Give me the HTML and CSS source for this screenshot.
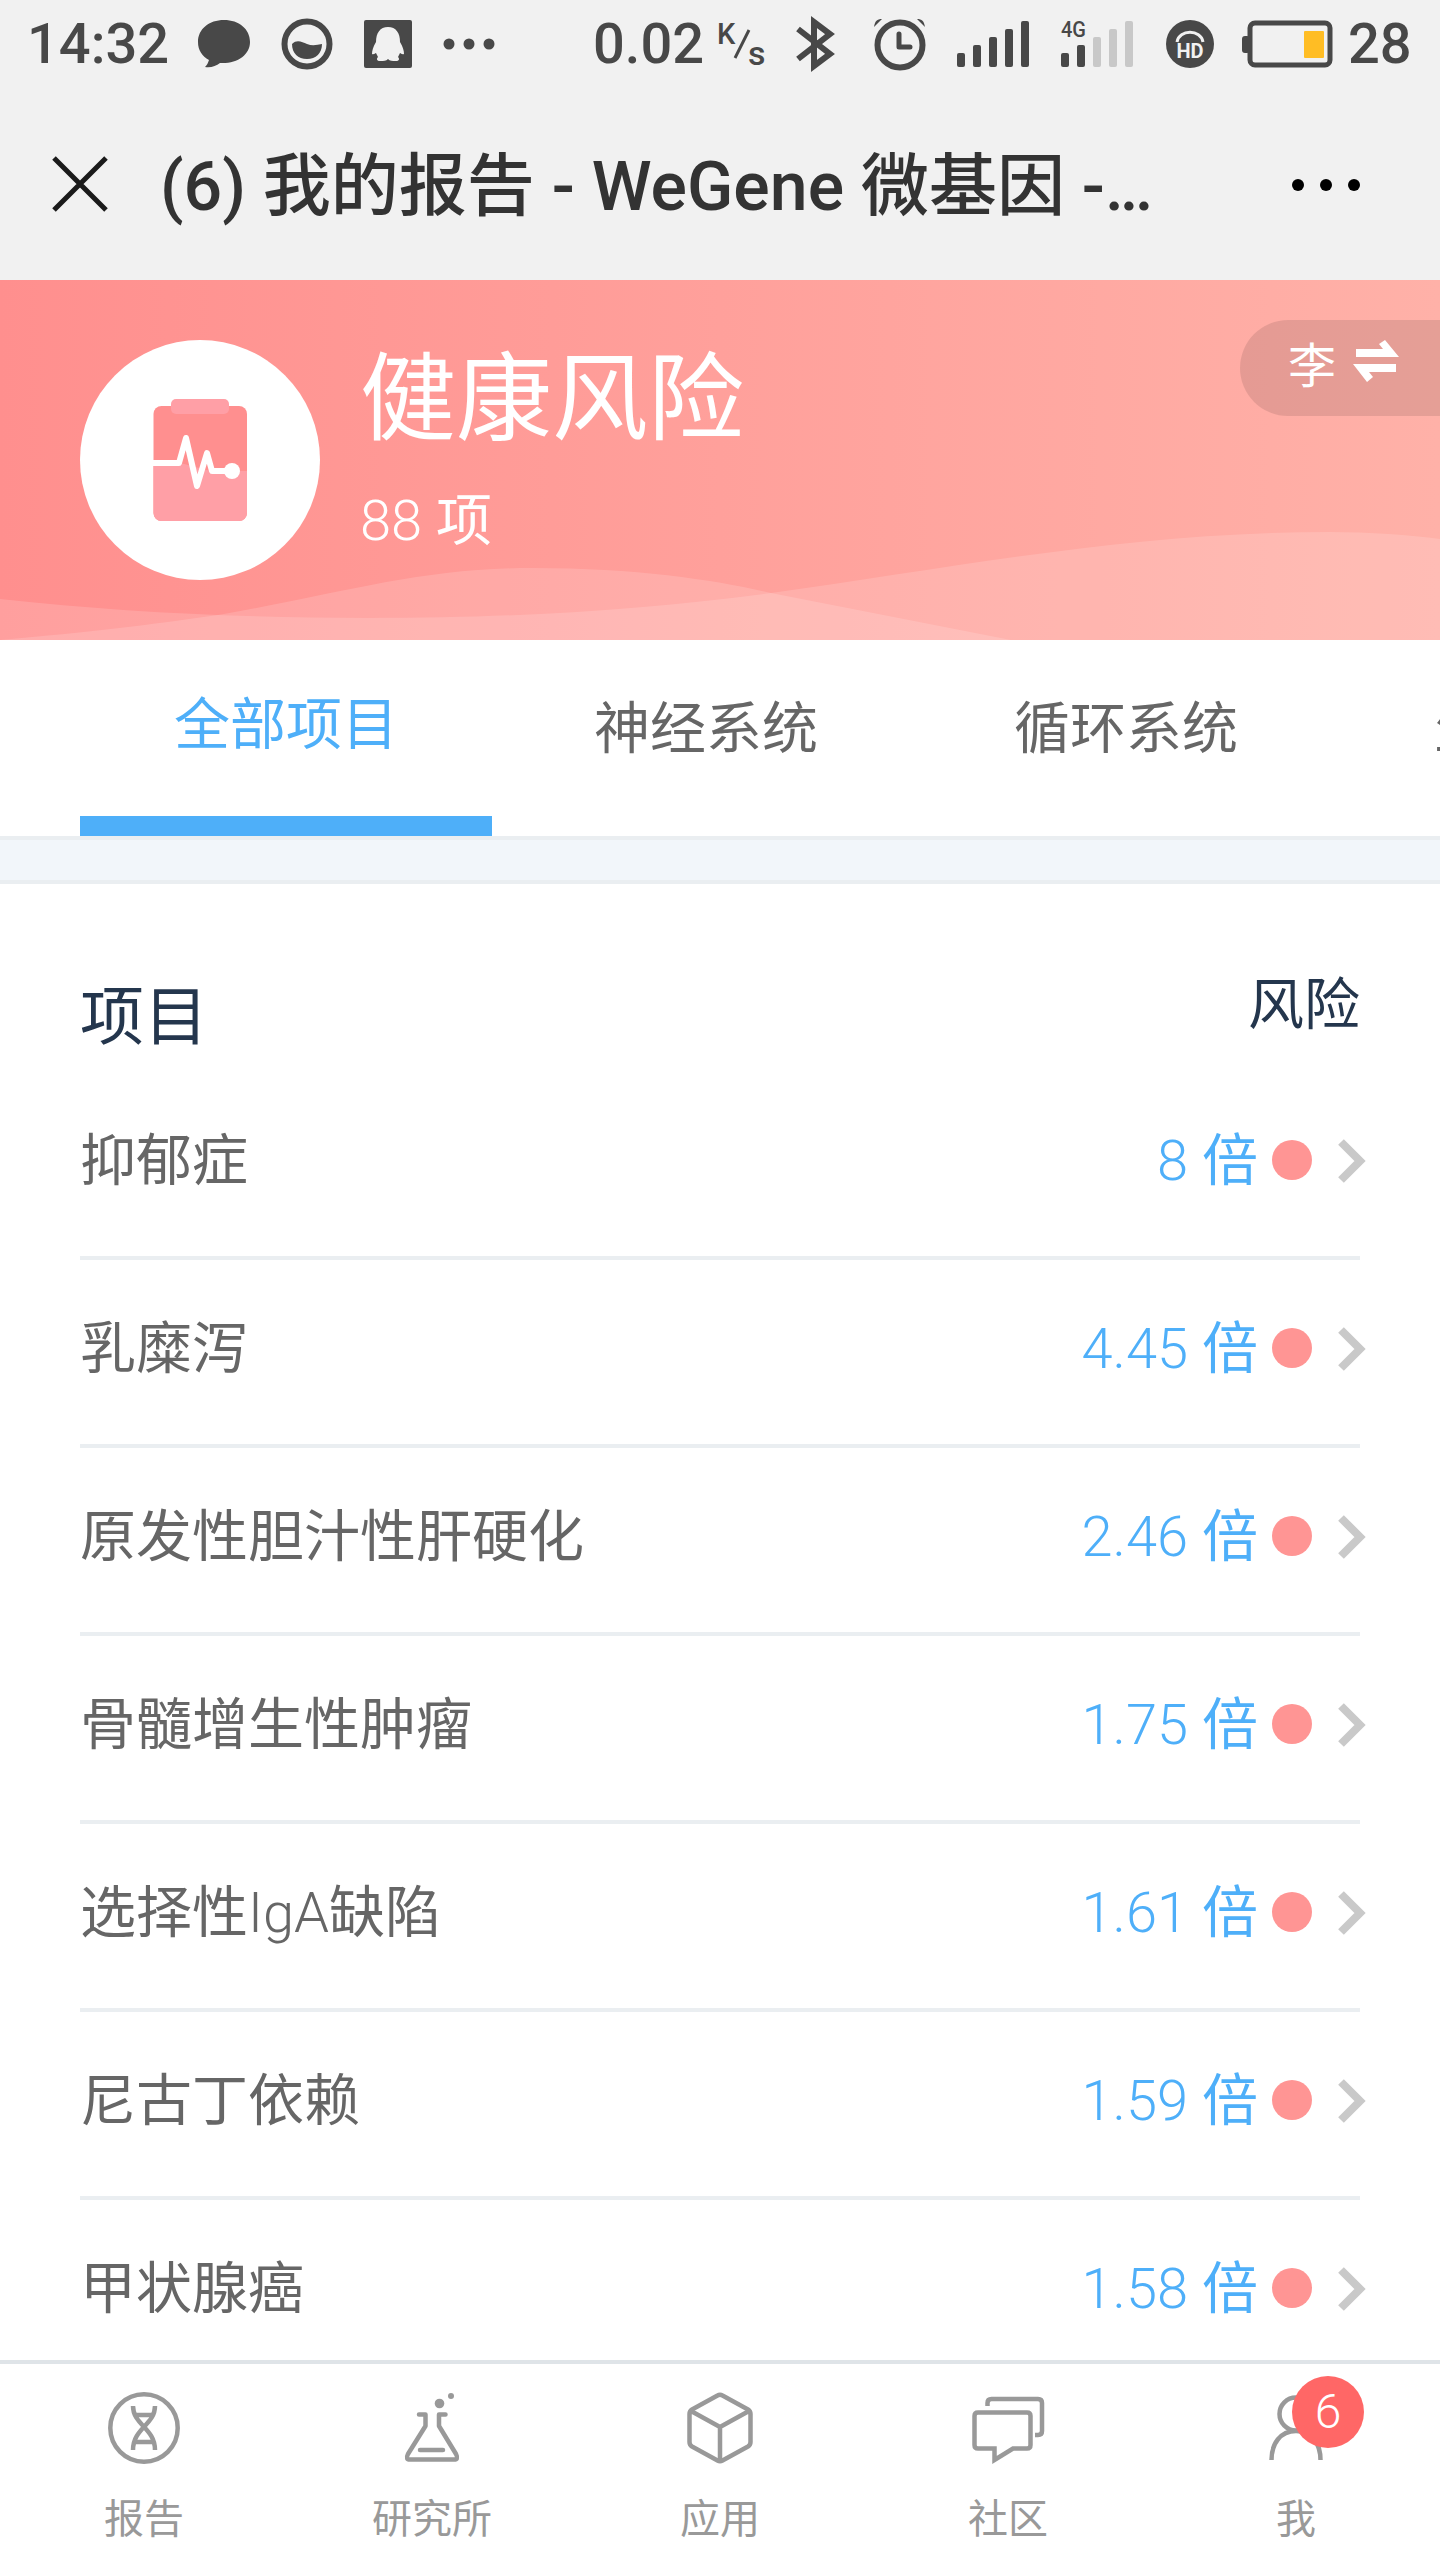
FILE: index.html
```
<!DOCTYPE html>
<html lang="zh-CN">
<head>
    <meta charset="UTF-8">
    <meta name="viewport" content="width=device-width, initial-scale=1.0">
    <title>(6) 我的报告 - WeGene 微基因</title>
    <link rel="stylesheet" href="styles.css">
</head>
<body>
    <div class="status-bar">
        <span class="time">14:32</span>
        <svg class="st-chat" width="52" height="50" viewBox="0 0 52 50"><path d="M26 1C11 1 0 10 0 23c0 8 4 14 11 18-1 3-2 5-4 7 6 1 11-1 15-4 17 1 30-8 30-21C52 10 41 1 26 1z" fill="#484848"/></svg>
        <svg class="st-face" width="52" height="52" viewBox="0 0 52 52"><circle cx="26" cy="26" r="22.5" fill="none" stroke="#484848" stroke-width="6"/><path d="M11 26c5-5 10-2 15 0s10 1 15 0c0 9-6 15-15 15s-15-6-15-15z" fill="#484848"/></svg>
        <svg class="st-qq" width="48" height="48" viewBox="0 0 48 48"><rect width="48" height="48" rx="2" fill="#484848"/><path d="M24 7c8 0 12 6 12 15 3 5 4 9 4 12-2 1-3-1-4-1l-2 4c2 2 1 4-2 4-4 0-6 0-8-2-2 2-4 2-8 2-3 0-4-2-2-4l-2-4c-1 0-2 2-4 1 0-3 1-7 4-12 0-9 4-15 12-15z" fill="#f1f1f1"/></svg>
        <svg class="st-more" width="52" height="12" viewBox="0 0 52 12"><g fill="#484848"><circle cx="6" cy="6" r="5.5"/><circle cx="26" cy="6" r="5.5"/><circle cx="46" cy="6" r="5.5"/></g></svg>
        <span class="speed">0.02</span>
        <span class="unit"><span class="unit-k">K</span><svg width="18" height="30" viewBox="0 0 18 30"><path d="M2 29L16 1" stroke="#484848" stroke-width="3"/></svg><span class="unit-s">s</span></span>
        <svg class="st-bt" width="40" height="52" viewBox="0 0 40 52"><path d="M2 11L34 36 18 48V4l16 12L2 41" fill="none" stroke="#484848" stroke-width="6"/></svg>
        <svg class="st-alarm" width="52" height="52" viewBox="0 0 52 52"><g fill="none" stroke="#484848" stroke-width="6"><circle cx="26" cy="27" r="22.5"/><path d="M25 16v13h11" stroke-width="5" stroke-linejoin="round" stroke-linecap="round"/></g><path d="M0 9C1 3 3 1 8 1zM51 9C50 3 48 1 43 1z" fill="#484848"/></svg>
        <svg class="st-signal" width="72" height="46" viewBox="0 0 72 46"><g fill="#484848"><rect y="32" width="8" height="14" rx="2"/><rect x="16" y="24" width="8" height="22" rx="2"/><rect x="32" y="16" width="8" height="30" rx="2"/><rect x="48" y="8" width="8" height="38" rx="2"/><rect x="64" width="8" height="46" rx="2"/></g></svg>
        <svg class="st-signal2" width="72" height="46" viewBox="0 0 72 46"><text x="0" y="15.500" class="label-4g" textLength="25" lengthAdjust="spacingAndGlyphs">4G</text><g fill="#484848"><rect y="32" width="8" height="14" rx="2"/><rect x="16" y="24" width="8" height="22" rx="2"/></g><g fill="#c8c8c8"><rect x="32" y="16" width="8" height="30" rx="2"/><rect x="48" y="8" width="8" height="38" rx="2"/><rect x="64" width="8" height="46" rx="2"/></g></svg>
        <svg class="st-hd" width="48" height="48" viewBox="0 0 48 48"><circle cx="24" cy="24" r="24" fill="#484848"/><path d="M11 22C13 9 35 9 37 22" fill="none" stroke="#f1f1f1" stroke-width="3"/><text x="24" y="37.500" class="label-hd" text-anchor="middle">HD</text></svg>
        <svg class="st-battery" width="92" height="48" viewBox="0 0 92 48"><rect y="16" width="8" height="17" rx="3" fill="#484848"/><rect x="8" y="3" width="80" height="42" rx="5" fill="none" stroke="#484848" stroke-width="5"/><rect x="62" y="11" width="20" height="27" rx="1" fill="#ffbd24"/></svg>
        <span class="percent">28</span>
    </div>

    <div class="title-bar">
        <svg class="close" width="56" height="56" viewBox="0 0 56 56"><path d="M2 2l52 52M54 2L2 54" stroke="#1a1a1a" stroke-width="5"/></svg>
        <h1>(6) 我的报告 - WeGene 微基因 -<span class="ellipsis">...</span></h1>
        <svg class="menu" width="70" height="12" viewBox="0 0 70 12"><circle cx="7" cy="6" r="6"/><circle cx="35" cy="6" r="6"/><circle cx="63" cy="6" r="6"/></svg>
    </div>

    <div class="banner">
        <svg class="waves" width="1440" height="360" viewBox="0 0 1440 360">
            <path d="M0 319C120 332 240 338 370 338 520 338 640 330 771 313 960 287 1130 252 1330 252c40 0 80 3 110 7v101H0z"/>
            <path d="M0 360C90 352 150 345 218 335 350 312 420 288 533 288c107 0 187 13 238 25l240 47z"/>
        </svg>
        <svg class="banner-icon" width="240" height="240" viewBox="0 0 240 240">
            <circle cx="120" cy="120" r="120" fill="#fff"/>
            <rect x="73.500" y="66" width="93.500" height="115" rx="8" fill="#ff8f8f"/>
            <path d="M73.500 123h27l30 8H167v42a8 8 0 0 1-8 8H81.500a8 8 0 0 1-8-8z" fill="#ff9fa6"/>
            <rect x="91" y="59" width="58" height="15" rx="5" fill="#ff9fa6"/>
            <path d="M73 123h26l7-25 11 48 10-33 5 18h20" fill="none" stroke="#fff" stroke-width="6" stroke-linejoin="round"/>
            <circle cx="152" cy="131" r="8" fill="#fff"/>
        </svg>
        <div class="banner-text">
            <h2>健康风险</h2>
            <p><span class="num">88</span> 项</p>
        </div>
        <div class="switch-user">
            <span>李</span>
            <svg width="46" height="42" viewBox="0 0 46 42"><path d="M3 9h27l-4-5 6-4 14 17H3zM0 24h43v8H16l4 5-6 5z" fill="#fff"/></svg>
        </div>
    </div>

    <div class="tabs">
        <div class="tab active">全部项目</div>
        <div class="tab">神经系统</div>
        <div class="tab">循环系统</div>
        <div class="tab">生殖系统</div>
    </div>
    <div class="divider"></div>

    <div class="list">
        <div class="list-head">
            <span class="head-item">项目</span>
            <span class="head-risk">风险</span>
        </div>
        <div class="row">
            <span class="name">抑郁症</span>
            <span class="value"><span class="num">8</span> 倍</span>
            <span class="dot"></span>
            <svg class="arrow" width="28" height="46" viewBox="0 0 28 46"><path d="M3 4l19 19L3 42"/></svg>
        </div>
        <div class="row">
            <span class="name">乳糜泻</span>
            <span class="value"><span class="num">4.45</span> 倍</span>
            <span class="dot"></span>
            <svg class="arrow" width="28" height="46" viewBox="0 0 28 46"><path d="M3 4l19 19L3 42"/></svg>
        </div>
        <div class="row">
            <span class="name">原发性胆汁性肝硬化</span>
            <span class="value"><span class="num">2.46</span> 倍</span>
            <span class="dot"></span>
            <svg class="arrow" width="28" height="46" viewBox="0 0 28 46"><path d="M3 4l19 19L3 42"/></svg>
        </div>
        <div class="row">
            <span class="name">骨髓增生性肿瘤</span>
            <span class="value"><span class="num">1.75</span> 倍</span>
            <span class="dot"></span>
            <svg class="arrow" width="28" height="46" viewBox="0 0 28 46"><path d="M3 4l19 19L3 42"/></svg>
        </div>
        <div class="row">
            <span class="name">选择性<span class="num">IgA</span>缺陷</span>
            <span class="value"><span class="num">1.61</span> 倍</span>
            <span class="dot"></span>
            <svg class="arrow" width="28" height="46" viewBox="0 0 28 46"><path d="M3 4l19 19L3 42"/></svg>
        </div>
        <div class="row">
            <span class="name">尼古丁依赖</span>
            <span class="value"><span class="num">1.59</span> 倍</span>
            <span class="dot"></span>
            <svg class="arrow" width="28" height="46" viewBox="0 0 28 46"><path d="M3 4l19 19L3 42"/></svg>
        </div>
        <div class="row">
            <span class="name">甲状腺癌</span>
            <span class="value"><span class="num">1.58</span> 倍</span>
            <span class="dot"></span>
            <svg class="arrow" width="28" height="46" viewBox="0 0 28 46"><path d="M3 4l19 19L3 42"/></svg>
        </div>
    </div>

    <div class="nav">
        <div class="nav-item">
            <svg width="72" height="72" viewBox="0 0 72 72"><circle cx="36" cy="36" r="33.700"/><path d="M25 14c0 19 22 22 22 44M47 14c0 19-22 22-22 44M27 23h18M27 50h18"/></svg>
            <span>报告</span>
        </div>
        <div class="nav-item">
            <svg width="72" height="72" viewBox="0 0 72 72"><path d="M23 22.500h6.500V34L12 62c-2 4-1 5.500 2 5.500h44c3 0 4-1.500 2-5.500L43 34V22.500h6.500M24 58h23" stroke-linecap="round" stroke-linejoin="round"/><circle class="solid" cx="43.500" cy="11.500" r="4.800"/><circle class="solid" cx="55" cy="4" r="3"/></svg>
            <span>研究所</span>
        </div>
        <div class="nav-item">
            <svg width="72" height="72" viewBox="0 0 72 72"><path d="M33.500 3.500q2.500-1.500 5 0L64 17.500q2.500 1.500 2.500 4.500v28q0 3-2.500 4.500L38.500 68.500q-2.500 1.500-5 0L8 54.500Q5.500 53 5.500 50V22q0-3 2.500-4.500zM7 19l29 16 29-16M36 35v34" stroke-linejoin="round"/></svg>
            <span>应用</span>
        </div>
        <div class="nav-item">
            <svg width="72" height="72" viewBox="0 0 72 72"><path d="M6 20.500h49q3.500 0 3.500 3.500v29q0 3.500-3.500 3.500H41L22.500 68V56.500H6q-3.500 0-3.500-3.500V24q0-3.500 3.500-3.500zM15.500 14v-3q0-4 4-4H66q4 0 4 4v28q0 4-4 4h-3"/></svg>
            <span>社区</span>
        </div>
        <div class="nav-item">
            <svg width="72" height="72" viewBox="0 0 72 72"><circle cx="36" cy="22" r="16.500"/><path d="M11.500 68C11.500 52 20 39 36 39s24.500 13 24.500 29"/></svg>
            <span>我</span>
            <span class="badge">6</span>
        </div>
    </div>
</body>
</html>
```
FILE: styles.css
```
* {
    box-sizing: border-box;
}
body {
    margin: 0;
    width: 1440px;
    height: 2560px;
    overflow: hidden;
    display: flex;
    flex-direction: column;
    font-family: Roboto, "Noto Sans CJK SC", sans-serif;
    font-size: 56px;
    color: #666;
    background-color: #fff;
}
h1, h2, p {
    margin: 0;
    font-weight: 400;
}
svg {
    display: block;
    flex: none;
    overflow: visible;
}
.num {
    font-weight: 300;
}

/* phone status bar */
.status-bar {
    height: 88px;
    flex: none;
    display: flex;
    align-items: center;
    background-color: #f1f1f1;
    color: #484848;
    line-height: 88px;
    white-space: nowrap;
}
.time {
    width: 171px;
    margin-left: 27px;
    font-weight: 500;
}
.st-face {
    margin-left: 31px;
}
.st-qq {
    margin-left: 31px;
}
.st-more {
    margin-left: 31px;
}
.speed {
    width: 124px;
    margin-left: 98px;
    font-weight: 500;
}
.unit {
    width: 49px;
    height: 48px;
    display: flex;
    align-items: center;
    font-size: 29px;
    font-weight: 500;
    line-height: 28px;
}
.unit-k {
    align-self: flex-start;
    width: 16px;
}
.unit svg {
    margin-right: -3px;
}
.unit-s {
    align-self: flex-end;
    font-size: 34px;
    line-height: 30px;
}
.st-bt {
    margin-left: 30px;
}
.st-alarm {
    margin-left: 38px;
}
.st-signal {
    margin-left: 31px;
}
.st-signal2 {
    margin-left: 32px;
}
.st-hd {
    margin-left: 33px;
}
.st-battery {
    margin-left: 28px;
}
.percent {
    margin-left: 14px;
    font-weight: 500;
}
.label-4g {
    font: 500 22px Roboto, sans-serif;
    fill: #484848;
}
.label-hd {
    font: 700 20px Roboto, sans-serif;
    fill: #f1f1f1;
}

/* browser title bar */
.title-bar {
    height: 192px;
    flex: none;
    display: flex;
    align-items: center;
    padding: 0 79px 0 52px;
    background-color: #f1f1f1;
}
.title-bar h1 {
    flex: 1;
    margin-left: 52px;
    padding-bottom: 7px;
    font-size: 68px;
    font-weight: 500;
    color: #333;
    white-space: nowrap;
}
.ellipsis {
    letter-spacing: -4px;
}
.menu {
    margin-top: 2px;
}

.banner {
    position: relative;
    height: 360px;
    flex: none;
    display: flex;
    padding: 60px 0 0 80px;
    background: linear-gradient(90deg, #ff8f8e, #ffb1a8);
    color: #fff;
}
.waves {
    position: absolute;
    left: 0;
    top: 0;
}
.waves path {
    fill: rgba(255, 255, 255, 0.15);
}
.banner-icon {
    position: relative;
}
.banner-text {
    position: relative;
    flex: 1;
    margin-left: 40px;
}
.banner-text h2 {
    font-size: 96px;
    line-height: 118px;
}
.banner-text p {
    line-height: 64px;
    margin-top: 31px;
}
.switch-user {
    width: 200px;
    height: 96px;
    margin-top: -20px;
    padding-left: 48px;
    display: flex;
    border-radius: 48px 0 0 48px;
    background-color: rgba(0, 0, 0, 0.1);
    font-size: 48px;
    line-height: 94px;
}
.switch-user svg {
    margin: 20px 0 0 17px;
}

.tabs {
    height: 200px;
    flex: none;
    display: flex;
    gap: 8px;
    padding-left: 80px;
    border-bottom: 4px solid #eaeef1;
    overflow: hidden;
}
.tab {
    width: 412px;
    flex: none;
    line-height: 178px;
    text-align: center;
}
.tab.active {
    color: #4eaff9;
    line-height: 170px;
    border-bottom: 20px solid #4eaff9;
}
.divider {
    height: 44px;
    flex: none;
    background-color: #f2f6fa;
    border-bottom: 4px solid #eaeef1;
}

.list {
    flex: 1;
    min-height: 0;
    overflow: hidden;
    padding: 0 80px;
}
.list-head {
    height: 188px;
    display: flex;
    justify-content: space-between;
    color: #24364d;
}
.head-item {
    font-size: 64px;
    line-height: 267px;
}
.head-risk {
    line-height: 242px;
}
.row {
    height: 188px;
    display: flex;
    align-items: center;
    padding-bottom: 8px;
    border-bottom: 4px solid #eaeef1;
}
.name {
    flex: 1;
    padding-bottom: 9px;
}
.value {
    padding-bottom: 9px;
    color: #4eaff9;
}
.dot {
    width: 40px;
    height: 40px;
    margin-left: 14px;
    border-radius: 50%;
    background-color: #ff9594;
}
.arrow {
    margin: 2px -6px 0 26px;
}
.arrow path {
    fill: none;
    stroke: #c9c9c9;
    stroke-width: 8;
}

.nav {
    height: 200px;
    flex: none;
    display: flex;
    border-top: 4px solid #dfe4e8;
    background-color: #fff;
}
.nav-item {
    position: relative;
    flex: 1;
    display: flex;
    flex-direction: column;
    align-items: center;
    padding-top: 28px;
    font-size: 40px;
    line-height: 48px;
    color: #999;
}
.nav-item svg {
    margin-bottom: 32px;
    fill: none;
    stroke: #999;
    stroke-width: 4.5;
}
.nav-item .solid {
    fill: #999;
    stroke: none;
}
.badge {
    position: absolute;
    left: 140px;
    top: 12px;
    width: 72px;
    height: 72px;
    border-radius: 50%;
    background-color: #ff6766;
    color: #fff;
    font-size: 48px;
    font-weight: 300;
    line-height: 72px;
    text-align: center;
}
```
